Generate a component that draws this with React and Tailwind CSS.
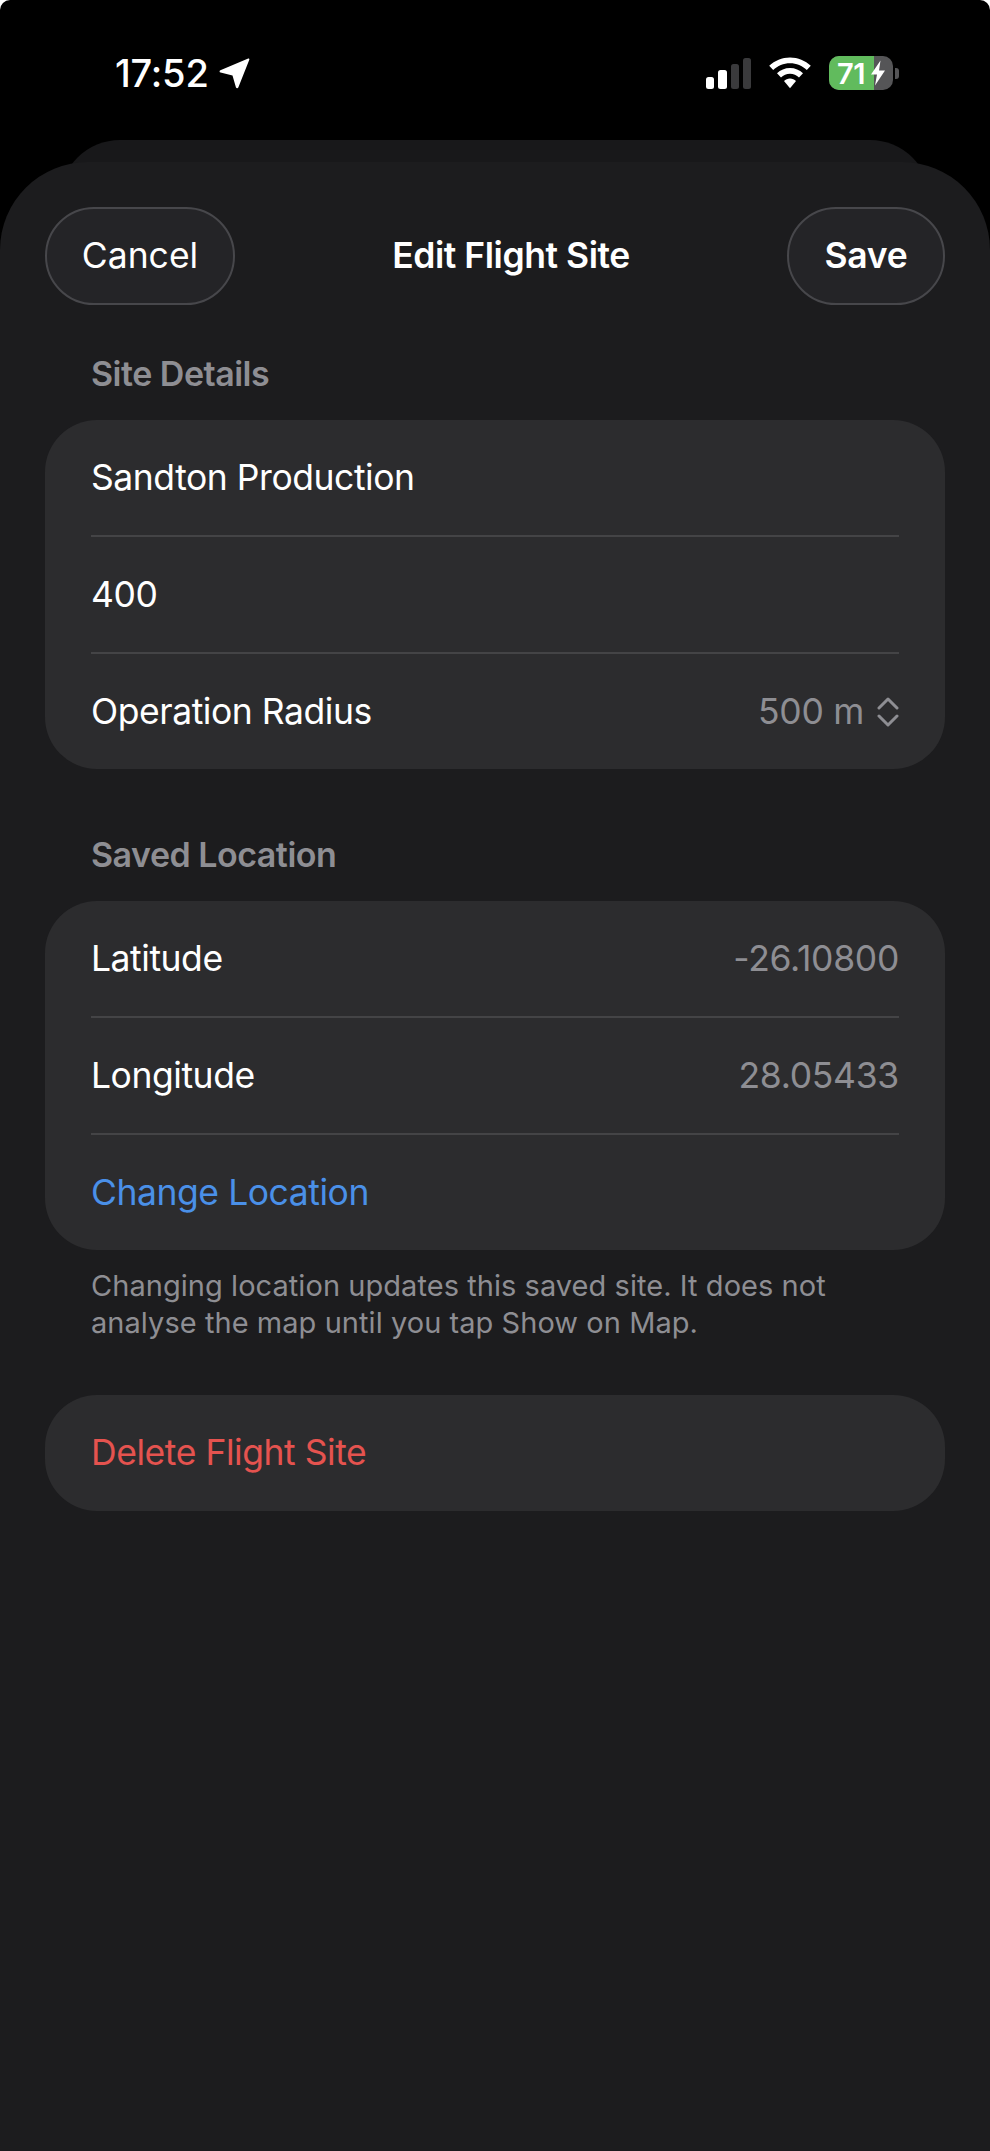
const font = { fontFamily: 'Inter, "Liberation Sans", sans-serif' };

function Row({ label, value, labelClass = "text-white", children, divider = true, h = "h-[117px]" }) {
  return (
    <div className={`flex items-center justify-between ${h} mx-[46px] ${divider ? "border-b-2 border-[#444446]" : ""}`}>
      <span className={`text-[35.5px] leading-none tracking-[-0.45px] ${labelClass}`}>{label}</span>
      {value && <span className="text-[35.5px] leading-none tracking-[-0.3px] text-[#8e8e93]">{value}</span>}
      {children}
    </div>
  );
}

function Heading({ children }) {
  return <div className="px-[91px] text-[34px] leading-[46px] font-semibold tracking-[-0.5px] text-[#8e8e93]">{children}</div>;
}

function PillButton({ children, className }) {
  return (
    <button className={`h-[98px] rounded-full border-2 border-[#47474b] bg-[#242427] text-[35.5px] leading-none text-white ${className}`}>
      {children}
    </button>
  );
}

export default function App() {
  return (
    <div className="w-[990px] h-[2151px] bg-white overflow-hidden" style={font}>
      <div className="h-full bg-black rounded-t-[10px] flex flex-col">
        <div className="h-[140px] shrink-0 relative flex items-start justify-between pl-[115px] pr-[91px] pt-[54px]">
          <div className="flex items-center">
            <span className="text-[38px] leading-[38px] font-medium tracking-[-0.2px] text-white">17:52</span>
            <svg width="32" height="32" viewBox="0 0 32 32" className="ml-[9px] -mt-[1px]" fill="white">
              <path d="M30.2 1.6 C31 1.3 31.6 2 31.3 2.8 L20.4 30.3 C19.9 31.6 18.3 31.5 17.9 30.2 L14.5 18.6 L2.6 15.6 C1.3 15.3 1.2 13.7 2.4 13.2 Z" />
            </svg>
          </div>
          <div className="flex items-center mt-[2px]">
            <div className="flex items-end gap-[4px] h-[31px]">
              <div className="w-[8px] h-[12px] rounded-[2.5px] bg-white" />
              <div className="w-[9px] h-[19px] rounded-[2.5px] bg-white" />
              <div className="w-[8px] h-[25px] rounded-[2.5px] bg-[#3a3a3c]" />
              <div className="w-[8px] h-[31px] rounded-[2.5px] bg-[#3a3a3c]" />
            </div>
            <svg width="44" height="32" viewBox="0 0 44 32" className="ml-[17px]" fill="white">
              <path d="M22 0.5 C30 0.5 37.2 3.6 42.8 8.8 L38.8 13 C34.4 8.9 28.5 6.3 22 6.3 C15.5 6.3 9.6 8.9 5.2 13 L1.2 8.8 C6.8 3.6 14 0.5 22 0.5 Z" />
              <path d="M22 11 C27 11 31.6 13 35 16.3 L31 20.5 C28.7 18.2 25.5 16.8 22 16.8 C18.5 16.8 15.3 18.2 13 20.5 L9 16.3 C12.4 13 17 11 22 11 Z" />
              <path d="M22 21.5 C24.4 21.5 26.4 22.4 28 23.9 L22 31.2 L16 23.9 C17.6 22.4 19.6 21.5 22 21.5 Z" />
            </svg>
            <div className="ml-[17px] flex items-center">
              <div className="relative w-[64px] h-[34px] rounded-[10px] bg-[#555557] overflow-hidden">
                <div className="absolute inset-y-0 left-0 w-[45px] bg-[#61bb5d]" />
                <div className="absolute inset-0 flex items-center pl-[8px] text-[29px] leading-none font-semibold text-white tracking-[-0.5px]">
                  71
                </div>
                <svg width="16" height="26" viewBox="0 0 16 26" className="absolute left-[41px] top-[4px]" fill="white">
                  <path d="M10.5 0.5 L1 14.5 L7 14.5 L5 25.5 L15 10.5 L9 10.5 Z" />
                </svg>
              </div>
              <div className="ml-[2px] w-[4px] h-[11px] rounded-r-[3px] bg-[#555557]" />
            </div>
          </div>
        </div>

        <div className="shrink-0 h-[60px] -mb-[38px] mx-[60px] rounded-t-[62px] bg-[#18181a]" />

        <div className="relative flex-1 rounded-t-[88px] bg-[#1c1c1e] flex flex-col">
          <div className="relative flex items-center justify-between px-[45px] pt-[45px]">
            <PillButton className="w-[190px]">Cancel</PillButton>
            <span className="text-[35.5px] leading-none font-semibold tracking-[-0.45px] text-white">Edit Flight Site</span>
            <PillButton className="w-[158px] font-semibold tracking-[-0.3px]">Save</PillButton>
          </div>

          <div className="mt-[46px]">
            <Heading>Site Details</Heading>
          </div>
          <div className="mx-[45px] mt-[23px] rounded-[52px] bg-[#2c2c2e]">
            <Row label="Sandton Production" />
            <Row label="400" />
            <Row label="Operation Radius" divider={false} h="h-[115px]">
              <span className="flex items-center text-[35.5px] leading-none tracking-[-0.3px] text-[#8e8e93]">
                500 m
                <svg width="22" height="30" viewBox="0 0 22 30" className="ml-[13px]" fill="none" stroke="#8e8e93" strokeWidth="3" strokeLinecap="round" strokeLinejoin="round">
                  <path d="M2 11 L11 2 L20 11" />
                  <path d="M2 19 L11 28 L20 19" />
                </svg>
              </span>
            </Row>
          </div>

          <div className="mt-[63px]">
            <Heading>Saved Location</Heading>
          </div>
          <div className="mx-[45px] mt-[23px] rounded-[52px] bg-[#2c2c2e]">
            <Row label="Latitude" value="-26.10800" />
            <Row label="Longitude" value="28.05433" />
            <Row label="Change Location" labelClass="text-[#4a90e8]" divider={false} h="h-[115px]" />
          </div>

          <p className="mt-[18px] px-[91px] text-[29px] leading-[36.5px] tracking-[0.05px] text-[#8e8e93]">
            Changing location updates this saved site. It does not<br />
            analyse the map until you tap Show on Map.
          </p>

          <div className="mx-[45px] mt-[54px] h-[116px] rounded-[52px] bg-[#2c2c2e] flex items-center px-[46px]">
            <span className="text-[35.5px] leading-none tracking-[-0.45px] text-[#e5534f]">Delete Flight Site</span>
          </div>
        </div>
      </div>
    </div>
  );
}
